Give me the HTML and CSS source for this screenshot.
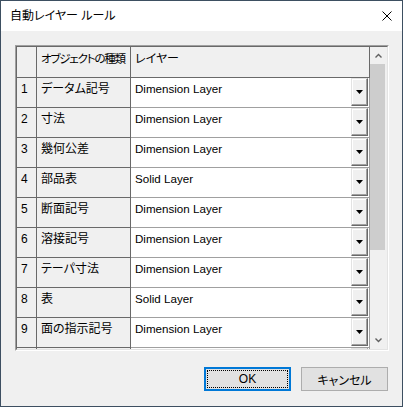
FILE: index.html
```html
<!DOCTYPE html>
<html lang="ja">
<head>
<meta charset="utf-8">
<title>自動レイヤー ルール</title>
<link rel="stylesheet" href="styles.css">
</head>
<body>
<div class="window">
  <div class="titlebar">
    <span class="title">自動レイヤー ルール</span>
    <svg class="close" width="10" height="10" viewBox="0 0 10 10"><path d="M0.5 0.5 L9.5 9.5 M9.5 0.5 L0.5 9.5" stroke="#000" stroke-width="1" fill="none"/></svg>
  </div>
  <div class="content">
    <div class="frame">
      <div class="frame-inner">
        <div class="grid">
          <div class="row head">
            <div class="cell c0"></div>
            <div class="cell c1 tight">オブジェクトの種類</div>
            <div class="cell c2">レイヤー</div>
          </div>
          <div class="row"><div class="cell c0">1</div><div class="cell c1">データム記号</div><div class="cell c2 dd"><span class="val">Dimension Layer</span><span class="ddbtn"><svg width="7" height="4" viewBox="0 0 7 4"><polygon points="0,0 7,0 3.5,4" fill="#000"/></svg></span></div></div>
          <div class="row"><div class="cell c0">2</div><div class="cell c1">寸法</div><div class="cell c2 dd"><span class="val">Dimension Layer</span><span class="ddbtn"><svg width="7" height="4" viewBox="0 0 7 4"><polygon points="0,0 7,0 3.5,4" fill="#000"/></svg></span></div></div>
          <div class="row"><div class="cell c0">3</div><div class="cell c1">幾何公差</div><div class="cell c2 dd"><span class="val">Dimension Layer</span><span class="ddbtn"><svg width="7" height="4" viewBox="0 0 7 4"><polygon points="0,0 7,0 3.5,4" fill="#000"/></svg></span></div></div>
          <div class="row"><div class="cell c0">4</div><div class="cell c1">部品表</div><div class="cell c2 dd"><span class="val">Solid Layer</span><span class="ddbtn"><svg width="7" height="4" viewBox="0 0 7 4"><polygon points="0,0 7,0 3.5,4" fill="#000"/></svg></span></div></div>
          <div class="row"><div class="cell c0">5</div><div class="cell c1">断面記号</div><div class="cell c2 dd"><span class="val">Dimension Layer</span><span class="ddbtn"><svg width="7" height="4" viewBox="0 0 7 4"><polygon points="0,0 7,0 3.5,4" fill="#000"/></svg></span></div></div>
          <div class="row"><div class="cell c0">6</div><div class="cell c1">溶接記号</div><div class="cell c2 dd"><span class="val">Dimension Layer</span><span class="ddbtn"><svg width="7" height="4" viewBox="0 0 7 4"><polygon points="0,0 7,0 3.5,4" fill="#000"/></svg></span></div></div>
          <div class="row"><div class="cell c0">7</div><div class="cell c1">テーパ寸法</div><div class="cell c2 dd"><span class="val">Dimension Layer</span><span class="ddbtn"><svg width="7" height="4" viewBox="0 0 7 4"><polygon points="0,0 7,0 3.5,4" fill="#000"/></svg></span></div></div>
          <div class="row"><div class="cell c0">8</div><div class="cell c1">表</div><div class="cell c2 dd"><span class="val">Solid Layer</span><span class="ddbtn"><svg width="7" height="4" viewBox="0 0 7 4"><polygon points="0,0 7,0 3.5,4" fill="#000"/></svg></span></div></div>
          <div class="row"><div class="cell c0">9</div><div class="cell c1">面の指示記号</div><div class="cell c2 dd"><span class="val">Dimension Layer</span><span class="ddbtn"><svg width="7" height="4" viewBox="0 0 7 4"><polygon points="0,0 7,0 3.5,4" fill="#000"/></svg></span></div></div>
          <div class="row"><div class="cell c0"></div><div class="cell c1"></div><div class="cell c2 dd"><span class="val"></span><span class="ddbtn"></span></div></div>
        </div>
        <div class="scrollbar">
          <div class="sbbtn"><svg width="7" height="5" viewBox="0 0 7 5"><polyline points="0.5,4.5 3.5,1.5 6.5,4.5" fill="none" stroke="#606060" stroke-width="1.4"/></svg></div>
          <div class="track"><div class="thumb"></div></div>
          <div class="sbbtn"><svg width="7" height="5" viewBox="0 0 7 5"><polyline points="0.5,0.5 3.5,3.5 6.5,0.5" fill="none" stroke="#606060" stroke-width="1.4"/></svg></div>
        </div>
      </div>
    </div>
    <div class="buttons">
      <button class="btn default"><span class="focus">OK</span></button>
      <button class="btn">キャンセル</button>
    </div>
  </div>
</div>
</body>
</html>
```

FILE: styles.css
```css
html, body {
  margin: 0;
  padding: 0;
  background: #f0f0f0;
}
body {
  font-family: "Liberation Sans", "Noto Sans CJK JP", sans-serif;
  font-size: 12px;
  font-feature-settings: "palt";
  color: #000;
}
.window {
  width: 403px;
  height: 407px;
  box-sizing: border-box;
  border: 1px solid #3d4f61;
  background: #f0f0f0;
  display: flex;
  flex-direction: column;
}
.titlebar {
  height: 30px;
  background: #fff;
  display: flex;
  align-items: center;
  justify-content: space-between;
  padding: 0 10px 0 9px;
  box-sizing: border-box;
}
.title {
  line-height: 15px;
  padding-top: 1px;
}
.close {
  display: block;
  margin-top: -1px;
}
.content {
  flex: 1;
  padding: 14px 13px 0 14px;
  display: flex;
  flex-direction: column;
}
.frame {
  width: 374px;
  height: 306px;
  box-sizing: border-box;
  border-style: solid;
  border-width: 1px;
  border-color: #a0a0a0 #ffffff #ffffff #a0a0a0;
}
.frame-inner {
  height: 100%;
  box-sizing: border-box;
  border-style: solid;
  border-width: 1px;
  border-color: #696969 #e3e3e3 #e3e3e3 #696969;
  display: flex;
  overflow: hidden;
}
.grid {
  width: 353px;
  flex: none;
  overflow: hidden;
}
.row {
  display: grid;
  grid-template-columns: 20px 94px 239px;
  height: 30px;
}
.row.head {
  height: 31px;
}
.cell {
  box-sizing: border-box;
  border-right: 1px solid #696969;
  border-bottom: 1px solid #696969;
  padding: 4px 4px 0;
  line-height: 15px;
  white-space: nowrap;
  overflow: hidden;
}
.head .cell {
  padding-top: 5px;
}
.tight {
  font-size: 11.5px;
  letter-spacing: -1.2px;
  padding-right: 0;
}
.c2 {
  background: #fff;
  border-right-color: #a0a0a0;
  border-bottom-color: #a0a0a0;
}
.head .c2 {
  background: #f0f0f0;
  border-right-color: #696969;
  border-bottom-color: #696969;
}
.dd {
  display: flex;
  padding: 0 1px 0 4px;
}
.dd .val {
  flex: 1;
  padding-top: 3px;
  font-size: 11.6px;
}
.ddbtn {
  width: 17px;
  height: 28px;
  box-sizing: border-box;
  background: #f0f0f0;
  border-style: solid;
  border-width: 1px;
  border-color: #e3e3e3 #696969 #696969 #e3e3e3;
  box-shadow: inset -1px -1px 0 #a0a0a0, inset 1px 1px 0 #fff;
  display: flex;
  align-items: center;
  justify-content: center;
}
.ddbtn svg {
  display: block;
}
.scrollbar {
  width: 17px;
  flex: none;
  display: flex;
  flex-direction: column;
  background: #f0f0f0;
}
.sbbtn {
  height: 17px;
  flex: none;
  display: flex;
  align-items: center;
  justify-content: center;
}
.sbbtn svg {
  display: block;
}
.track {
  flex: 1;
}
.thumb {
  width: 15px;
  height: 186px;
  background: #cdcdcd;
}
.buttons {
  display: flex;
  justify-content: flex-end;
  gap: 10px;
  margin-top: 16px;
  padding-right: 1px;
}
.btn {
  width: 87px;
  height: 24px;
  box-sizing: border-box;
  background: #e1e1e1;
  border: 1px solid #adadad;
  font-family: "Liberation Sans", "Noto Sans CJK JP", sans-serif;
  font-size: 12px;
  font-feature-settings: "palt";
  color: #000;
  padding: 0;
  margin: 0;
  display: flex;
  align-items: center;
  justify-content: center;
}
.btn.default {
  border: 2px solid #0078d7;
  padding: 1px;
}
.btn .focus {
  flex: 1;
  align-self: stretch;
  border: 1px dotted #000;
  display: flex;
  align-items: center;
  justify-content: center;
}
```
